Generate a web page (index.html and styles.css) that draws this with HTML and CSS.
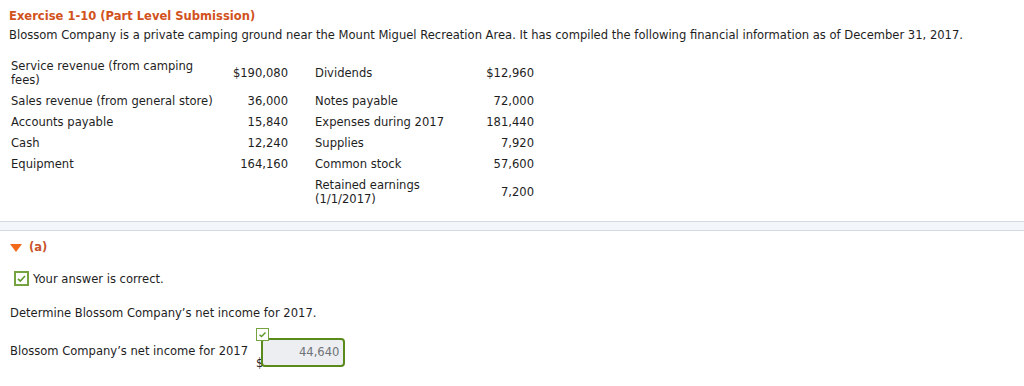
FILE: index.html
```html
<!DOCTYPE html>
<html>
<head>
<meta charset="utf-8">
<link rel="stylesheet" href="styles.css">
</head>
<body>
<div class="head">
  <h1 class="title">Exercise 1-10 (Part Level Submission)</h1>
  <p class="desc">Blossom Company is a private camping ground near the Mount Miguel Recreation Area. It has compiled the following financial information as of December 31, 2017.</p>
  <div class="fin">
    <div class="lbl">Service revenue (from camping fees)</div><div class="amt">$190,080</div><div class="lbl">Dividends</div><div class="amt">$12,960</div>
    <div class="lbl">Sales revenue (from general store)</div><div class="amt">36,000</div><div class="lbl">Notes payable</div><div class="amt">72,000</div>
    <div class="lbl">Accounts payable</div><div class="amt">15,840</div><div class="lbl">Expenses during 2017</div><div class="amt">181,440</div>
    <div class="lbl">Cash</div><div class="amt">12,240</div><div class="lbl">Supplies</div><div class="amt">7,920</div>
    <div class="lbl">Equipment</div><div class="amt">164,160</div><div class="lbl">Common stock</div><div class="amt">57,600</div>
    <div class="lbl"></div><div class="amt"></div><div class="lbl">Retained earnings (1/1/2017)</div><div class="amt">7,200</div>
  </div>
</div>
<div class="divider"></div>
<div class="part">
  <div class="part-head"><span class="tri"></span><span class="part-label">(a)</span></div>
  <div class="correct">
    <span class="chk"><svg width="11" height="11" viewBox="0 0 11 11"><path d="M2 5.8 L4.3 8 L9 3" fill="none" stroke="#5f9a2a" stroke-width="1.6"/></svg></span>
    <span>Your answer is correct.</span>
  </div>
  <p class="q">Determine Blossom Company’s net income for 2017.</p>
  <div class="answer">
    <span class="ans-label">Blossom Company’s net income for 2017</span>
    <div class="field">
      <span class="mini"><svg width="9" height="9" viewBox="0 0 9 9"><path d="M1.5 4.8 L3.5 6.6 L7.5 2.5" fill="none" stroke="#5f9a2a" stroke-width="1.4"/></svg></span>
      <span class="dollar">$</span>
      <span class="input">44,640</span>
    </div>
  </div>
</div>
</body>
</html>
```
FILE: styles.css
```css
html, body { margin: 0; padding: 0; background: #fff; }
body {
  font-family: "DejaVu Sans", Verdana, sans-serif;
  font-size: 11.55px;
  color: #1e1e1e;
  width: 1024px;
  height: 386px;
  overflow: hidden;
}
.head { padding: 9px 0 0 9px; }
.title {
  margin: 0;
  font-size: 11.55px;
  line-height: 14px;
  font-weight: bold;
  color: #d1521d;
}
.desc { margin: 5px 0 0 0; line-height: 14px; }
.fin {
  display: grid;
  grid-template-columns: 216px 63px 177px 69px;
  margin-top: 13px;
  width: max-content;
}
.fin > div {
  padding: 3.5px 0;
  line-height: 14px;
  display: flex;
  align-items: center;
}
.fin > .lbl:nth-child(4n+1) { padding-left: 2px; }
.fin > .lbl:nth-child(4n+3) { padding-left: 27px; }
.fin > .amt { justify-content: flex-end; }
.divider {
  margin-top: 12px;
  height: 8px;
  background: #f4f7fa;
  border-top: 1px solid #d3dae3;
  border-bottom: 1px solid #d3dae3;
}
.part { padding-left: 10px; }
.part-head {
  display: flex;
  align-items: center;
  margin-top: 9px;
  height: 14px;
}
.tri {
  width: 0; height: 0;
  border-left: 6px solid transparent;
  border-right: 6px solid transparent;
  border-top: 8px solid #f26b1d;
  margin-right: 7px;
  margin-top: 1px;
}
.part-label { font-weight: bold; color: #c9532a; line-height: 14px; }
.correct {
  display: flex;
  align-items: center;
  margin-top: 17px;
  padding-left: 4px;
  line-height: 14px;
}
.chk {
  width: 11px; height: 11px;
  border: 2px solid #74a33f;
  display: inline-flex;
  margin-right: 4px;
}
.q { margin: 20px 0 0 0; line-height: 14px; }
.answer {
  display: flex;
  align-items: flex-start;
  margin-top: 8px;
}
.ans-label { margin-top: 16px; line-height: 14px; width: 246px; white-space: nowrap; }
.field { position: relative; display: flex; align-items: flex-end; padding-top: 10px; }
.mini {
  position: absolute;
  left: 0; top: 0;
  width: 11px; height: 11px;
  border: 1px solid #74a33f;
  background: #fff;
  display: flex;
  align-items: center;
  justify-content: center;
}
.dollar { line-height: 14px; margin-bottom: -3px; margin-right: -2px; color: #1e1e1e; }
.input {
  width: 76px;
  height: 25px;
  line-height: 25px;
  border: 2px solid #5b8a1c;
  border-radius: 4px;
  background: #eceef1;
  color: #6f7378;
  text-align: right;
  padding-right: 4px;
}
```
